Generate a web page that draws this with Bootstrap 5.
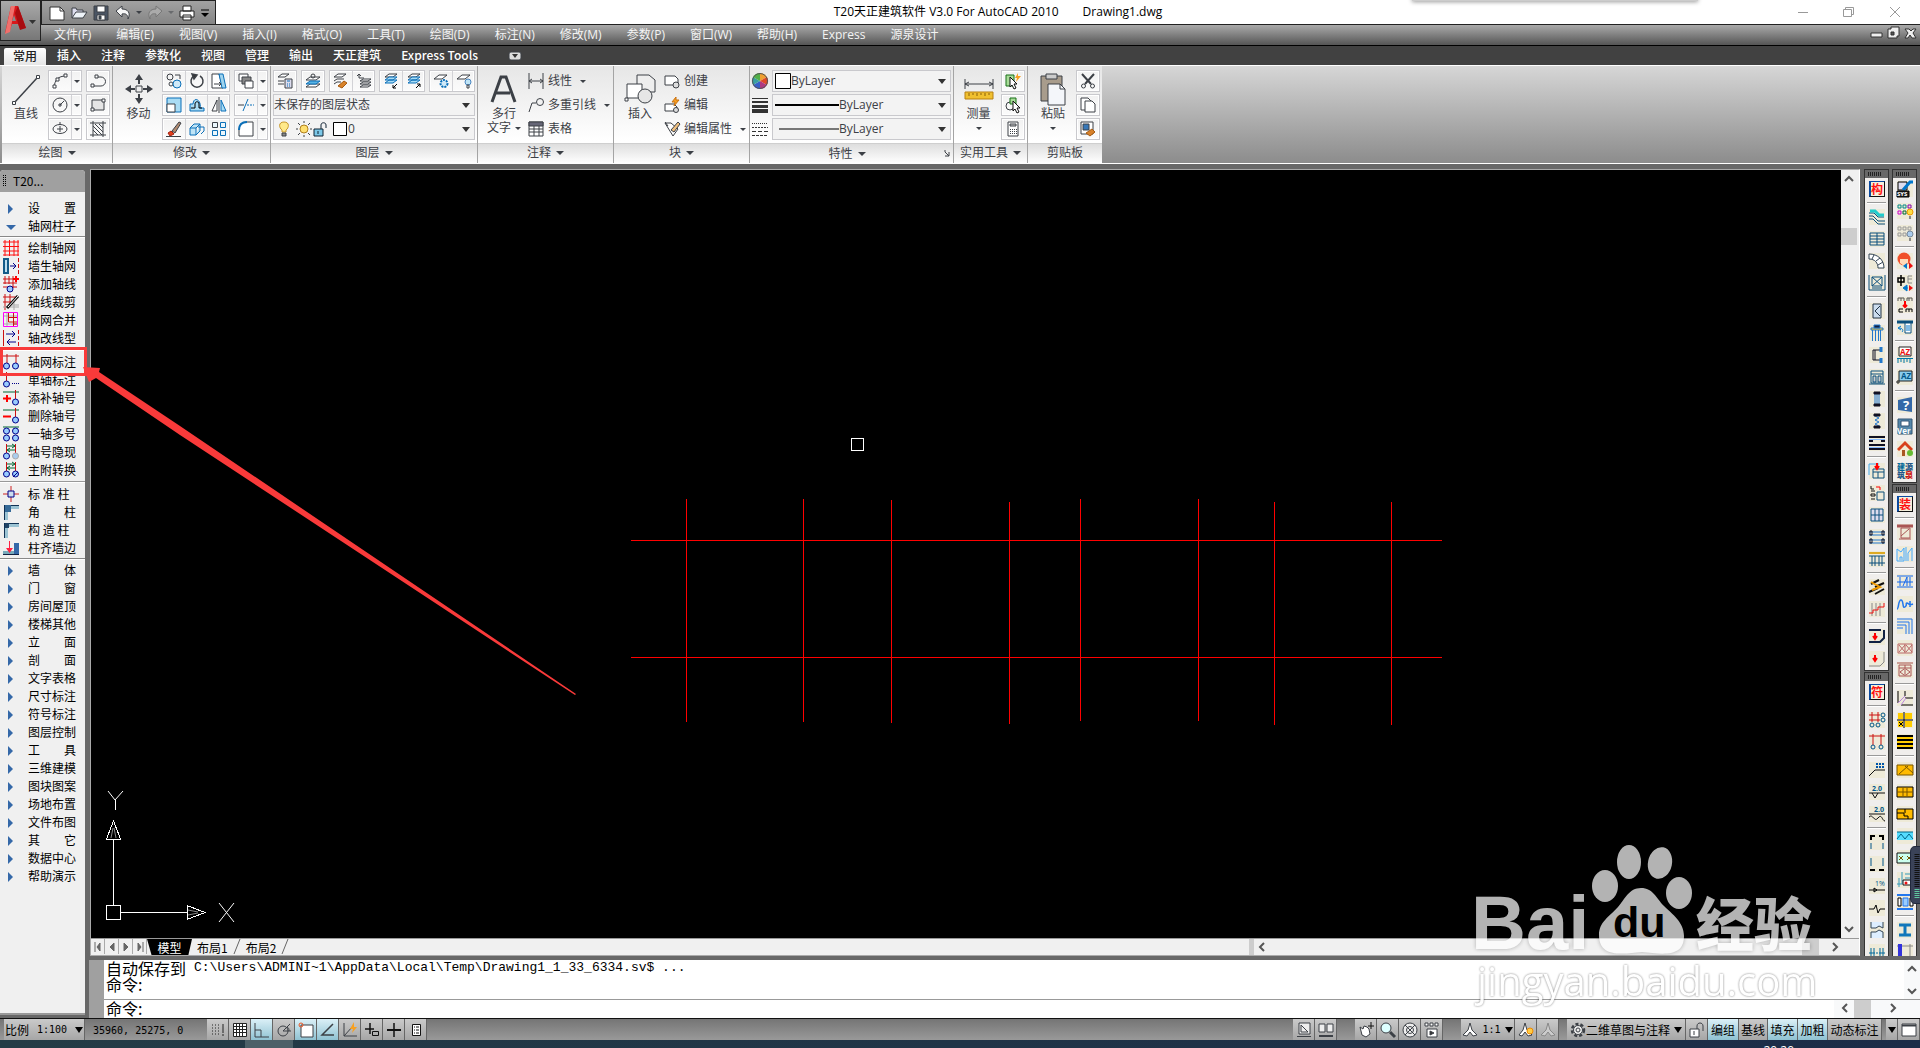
<!DOCTYPE html>
<html lang="zh-CN">
<head>
<meta charset="utf-8">
<meta name="viewport" content="width=device-width, initial-scale=1">
<title>T20天正建筑软件 V3.0 For AutoCAD 2010</title>
<link href="https://cdn.jsdelivr.net/npm/bootstrap@5.3.0/dist/css/bootstrap.min.css" rel="stylesheet">
<style>
:root{--ink:#3c4046;--frame:#686868}
body{font-family:"Open Sans","Noto Sans CJK SC",sans-serif;font-size:12px;line-height:16px;background:var(--frame);color:#000;overflow:hidden;fill:none;stroke:var(--ink)}
button,select,input{font:inherit;color:inherit;border:0;padding:0;background:none;border-radius:0}
svg{display:block;flex:none;overflow:visible}
.i16{width:16px;height:16px}
.i30{width:30px;height:34px}
.cjk{font-family:"Noto Sans CJK SC",sans-serif}
/* title and menus */
.titlebar{height:24px;background:#fff}
.quick{width:175px;margin-left:41px;background:linear-gradient(#a2a2a2,#858585);border:1px solid #222;border-bottom:0;padding-left:7px;gap:6px}
.quick .tri.sm{margin:0 -1px}
.appbtn{left:0;top:0;width:41px;height:41px;background:linear-gradient(#aaa,#777);border:1px solid #222;z-index:5}
.winctl{padding-right:2px}
.winctl button{width:46px;height:24px}
.floatedge{left:1412px;top:-4px;width:286px;height:5px;background:#ccc;box-shadow:0 1px 4px #999}
.menubar{height:22px;background:linear-gradient(#aaa,#555);border-top:1px solid #222;border-bottom:1px solid #000;padding-left:42px;color:#fff}
.menubar a{color:#f4f4f4;text-decoration:none;padding:2px 13px 2px 12px}
.tabbar{height:19px;background:#414141;padding-left:4px}
.tabbar a{color:#fff;text-decoration:none;padding:1px 10px;font-weight:500;font-family:"Noto Sans CJK SC",sans-serif}
.tabbar a.on{background:linear-gradient(#fff,#e6e6e6);color:#222;padding:1px 9px;border-radius:2px 2px 0 0;margin:2px 1px 0 0;line-height:14px}
/* ribbon */
.ribbon{height:99px;background:linear-gradient(#d6d6d6,#8c8c8c);border:solid #fff;border-width:1px 0;padding-left:2px;color:var(--ink)}
.panel{border-right:1px solid #a4a4a4;background:linear-gradient(#e6e6e6,#fff 75px)}
.pbody{height:77px;padding:4px 2px 0}
.pfoot{height:20px;border-top:1px solid #cfcfcf;background:linear-gradient(#dedede,#fff);line-height:18px;text-align:center;width:100%}
.tri{display:inline-block;border:solid transparent;border-width:4px 4px 0;border-top-color:var(--ink);vertical-align:2px;margin-left:5px}
.tri.sm{border-width:3px 3px 0;margin-left:6px}
.big{width:48px;line-height:14px;text-align:center}
.big svg{margin:3px auto 0}
.cell{height:22px;border:1px solid #c9c9cd;background:linear-gradient(#f2f2f2,#fbfbfb);box-shadow:inset 0 0 0 1px #fff}
.cell button{width:22px;display:flex;justify-content:center;align-items:center}
.cell button+button{border-left:1px solid #d2d2d6}
.cell button.dd{width:10px}
.cell .tri{margin:0;border-width:3px 3px 0}
.stack{display:flex;flex-direction:column;gap:2px}
.combo{height:22px;border:1px solid #c9c9cd;background:#f3f3f3;position:relative;padding-left:2px}
.combo::after{content:"";position:absolute;right:4px;top:8px;border:solid transparent;border-width:5px 4px 0;border-top-color:#333;pointer-events:none}
.combo select{appearance:none;flex:1;height:20px;outline:0}
.lrow{height:22px;display:flex;align-items:center;gap:4px;white-space:nowrap}
.lrow .tri{margin-left:4px}
/* side panel */
main{padding-top:5px}
.side{width:85px;background:#f0f0f0;border-radius:4px 4px 0 0;margin:1px 4px 3px 0;border-bottom:2px solid #999}
.sidecap{height:22px;background:#a0a0a0;border-radius:4px 4px 0 0;padding:0 0 0 3px;gap:6px;margin-bottom:7px}
.side button{display:flex;align-items:center;height:18px;width:85px;padding-left:3px;gap:9px;line-height:16px;white-space:nowrap}
.side hr{margin:0;height:4px;opacity:1;border:0;background:linear-gradient(#0000 1px,#888 1px 2px,#fff 2px 3px,#0000 3px)}
.side hr.wide{height:6px;background:linear-gradient(#0000 2px,#999 2px 3px,#fff 3px 4px,#0000 4px)}
/* drawing window */
.canvaswin{border:1px solid #aaa;border-right-color:#fff;margin:0 4px 0 1px;background:#f0f0f0}
.draw{background:#000}
.vbar{width:18px;padding-right:2px}
.thumb{background:#cdcdcd}
.vthumb{height:17px;margin-top:41px}
.sheets{height:17px;border-top:1px solid #999}
.sheets .nav1{width:14px;height:15px;border-right:1px solid #aaa;display:flex;align-items:center;justify-content:center}
.sheets .sheet{padding:0 5px;line-height:15px}
.sheet.on{background:#000;color:#fff;clip-path:polygon(0 0,100% 0,92% 100%,10% 100%);width:45px}
/* docked toolbars */
.dock{width:25px;margin-right:3px;overflow:hidden}
.tb{background:#f0eeec;border:1px solid #333;margin-bottom:1px;stroke:#0b4f7d}
.grip{height:8px;background:repeating-linear-gradient(90deg,#222 0 1px,#0000 1px 2px) 3px 2px/14px 4px no-repeat #686868}
.tb button{display:flex;width:23px;height:22px;align-items:center;justify-content:center}
.tb hr{margin:0 2px;height:6px;border:0;opacity:1;background:linear-gradient(#0000 2px,#999 2px 3px,#fff 3px 4px,#0000 4px)}
.tb svg{background:#eeead8;width:16px;height:16px}
.seal{width:16px;height:16px;border:solid #111;border-width:1px 1px 1px 2px;border-color:#0a4aa0 #111 #111 #0a4aa0;color:#f11;background:#f4f0dc;line-height:13px;font-weight:700}
/* command window */
.cmd{height:58px;background:#fff;border-left:15px solid #a0a0a0;margin-top:4px;font:13px/16px "Liberation Mono","Noto Sans CJK SC",monospace}
.cmd .zh{font:16px/16px "Noto Sans CJK SC",sans-serif;white-space:pre}
.cmd .say{height:16px;display:flex;align-items:center;padding-left:2px}
.cmd input{outline:0;flex:1}
.cmdin{border-top:1px solid #999;height:19px}
/* status bar */
.status{height:22px;background:linear-gradient(#757575,#999);border-top:1px solid #111}
.status button{height:21px;min-width:22px;border-right:1px solid #666;background:linear-gradient(#cacaca,#a6a6a6);display:flex;align-items:center;justify-content:center;white-space:nowrap}
.status button.on{background:linear-gradient(#dbf0f7,#8fc2d2)}
.status .gapr{margin-right:18px}
.mono{font-family:"DejaVu Sans Mono","Noto Sans CJK SC",monospace;font-size:10px}
.status .mono{line-height:24px}
.tri.dk{border-width:6px 4px 0;border-top-color:#000;margin-left:4px}
.taskbar{height:8px;background:linear-gradient(90deg,#243c46,#1c2c48)}
.clock{padding:3px 126px 0 0}
.over{position:absolute;pointer-events:none}
</style>
</head>
<body class="vh-100 d-flex flex-column position-relative">

<header>
<button class="appbtn position-absolute" aria-label="应用程序菜单"><svg width="39" height="38" stroke="none"><path d="M10 4h7l8 22-6 1-2-5h-6l-2 6-5 3z" fill="#d8181c"/><path d="M10 4h4l-5 26-5 2z" fill="#f0706c"/><path d="M17 4l8 22-6 2-5-17z" fill="#a80c10"/><path d="M13 13l2 6h-4z" fill="#8a8a8a"/><path d="M28 18h7l-3.500 4z" fill="#333"/></svg></button>
<div class="titlebar d-flex">
 <div class="quick d-flex align-items-center">
  <button aria-label="新建"><svg class="i16" stroke="#333"><path d="M1 2h10l4 4v9H1z" fill="#fff"/><path d="M11 2v4h4"/></svg></button>
  <button aria-label="打开"><svg class="i16"><path d="M1 13V3h4l1 2h6v2" fill="#dde"/><path d="M1 13L5 7h11l-4 6z" fill="#eef3f8"/></svg></button>
  <button aria-label="保存"><svg class="i16"><path d="M1 1h14v14H1z" fill="#4a5564"/><path d="M4 1h8v6H4zM4 10h8v5H4z" fill="#fff"/><path d="M6 11h2v3H6z" fill="#345"/></svg></button>
  <button aria-label="放弃"><svg class="i16"><path d="M1 6l6-5v3c6 0 9 4 6 10 0-4-2-6-6-5v3z" fill="#f6f6f6"/></svg></button>
  <i class="tri sm"></i>
  <button aria-label="重做"><svg class="i16" stroke="#777"><path d="M15 6L9 1v3C3 4 0 8 3 14c0-4 2-6 6-5v3z" fill="#aaa"/></svg></button>
  <i class="tri sm opacity-50"></i>
  <button aria-label="打印"><svg class="i16" stroke="#222"><path d="M4 1h8v5H4zM1 6h14v6H1zM4 10h8v5H4z" fill="#fff"/></svg></button>
  <svg width="8" height="8" stroke="#000"><path d="M0 1h8"/><path d="M0 4h8l-4 4z" fill="#000" stroke="none"/></svg>
 </div>
 <div class="flex-fill text-center pt-1"><span class="me-4">T20天正建筑软件 V3.0 For AutoCAD 2010</span><span>Drawing1.dwg</span></div>
 <div class="winctl d-flex">
  <button aria-label="最小化"><svg width="46" height="22" stroke="#999"><path d="M18 11.500h10"/></svg></button>
  <button aria-label="还原"><svg width="46" height="22" stroke="#999"><path d="M17.500 8.500h8v7h-8zM19.500 8.500v-2h8v7h-2"/></svg></button>
  <button aria-label="关闭"><svg width="46" height="22" stroke="#999"><path d="M18 6l10 10M28 6L18 16"/></svg></button>
 </div>
</div>
<nav class="menubar d-flex">
 <a href="#">文件(F)</a><a href="#">编辑(E)</a><a href="#">视图(V)</a><a href="#">插入(I)</a><a href="#">格式(O)</a><a href="#">工具(T)</a><a href="#">绘图(D)</a><a href="#">标注(N)</a><a href="#">修改(M)</a><a href="#">参数(P)</a><a href="#">窗口(W)</a><a href="#">帮助(H)</a><a href="#">Express</a><a href="#">源泉设计</a>
 <svg class="ms-auto me-1" width="46" height="18" stroke="#333"><path d="M1 8h11v4H1zM21 2h8v9h-2v2h-9V4h3zM35 4h4l2 2 2-2h3l-3 4 3 5h-4l-2-3-2 3h-3l3-5z" fill="#eee"/><path d="M21 7h3v3h-3z" fill="#555"/></svg>
</nav>
<nav class="tabbar d-flex">
 <a class="on" href="#">常用</a><a href="#">插入</a><a href="#">注释</a><a href="#">参数化</a><a href="#">视图</a><a href="#">管理</a><a href="#">输出</a><a href="#">天正建筑</a><a href="#">Express Tools</a>
 <button class="ms-3 ps-1" aria-label="最小化功能区"><svg width="14" height="9"><rect x="1" y="1" width="12" height="8" rx="2" fill="#ddd"/><path d="M4 3h6l-3 4z" fill="#333" stroke="none"/></svg></button>
</nav>
</header>

<section class="ribbon d-flex">
 <div class="panel" style="width:111px"><div class="pbody d-flex justify-content-between">
  <button class="big d-flex flex-column"><svg class="i30"><path d="M4 29L26 5" stroke-width="1.500"/><path d="M1.500 28.500h3v3h-3zM25.500 2.500h3v3h-3z" fill="#fff"/></svg><span class="w-100">直线</span></button>
  <div class="d-flex gap-1"><div class="stack">
   <div class="cell d-flex"><button aria-label="圆弧"><svg class="i16"><path d="M2 14C3 7 6 3 14 3"/><path d="M1 12h3v3H1zM4 5h3v3H4zM12 1h3v3h-3z" fill="#fff"/></svg></button><button class="dd"><i class="tri"></i></button></div>
   <div class="cell d-flex"><button aria-label="圆"><svg class="i16"><circle cx="8" cy="8" r="7"/><path d="M8 8l4-4"/><path d="M7 7h2v2H7z"/></svg></button><button class="dd"><i class="tri"></i></button></div>
   <div class="cell d-flex"><button aria-label="椭圆"><svg class="i16"><ellipse cx="8" cy="8" rx="7" ry="4.500"/><path d="M8 5v6M5 8h6M8 1v3"/></svg></button><button class="dd"><i class="tri"></i></button></div>
  </div><div class="stack">
   <div class="cell"><button class="h-100" aria-label="多段线"><svg class="i16"><path d="M7 4h4a4 4 0 010 9H3"/><path d="M5 2h3v3H5zM1 11h3v3H1z" fill="#fff"/></svg></button></div>
   <div class="cell"><button class="h-100" aria-label="矩形"><svg class="i16"><path d="M2 3h12v10H2z" fill="#e5e5e5"/><path d="M12 2h3v3h-3zM1 11h3v3H1z" fill="#fff"/></svg></button></div>
   <div class="cell"><button class="h-100" aria-label="图案填充"><svg class="i16"><path d="M3 0v16M13 0v16M0 2h16M0 14h16M3 5l9 9M5 3l8 8M3 9l5 5M9 3l4 4"/></svg></button></div>
  </div></div></div><div class="pfoot">绘图<i class="tri"></i></div></div>

 <div class="panel" style="width:158px"><div class="pbody d-flex justify-content-between">
  <button class="big d-flex flex-column"><svg class="i30" stroke-width="2"><path d="M15 3v8M15 21v8M3 16h8M19 16h8"/><path d="M15 1l4 6h-8zM15 31l4-6h-8zM1 16l6-4v8zM29 16l-6-4v8z" fill="#3c4046" stroke="none"/><path d="M12 13h6v6h-6z" stroke-width="1"/></svg><span class="w-100">移动</span></button>
  <div class="d-flex gap-1"><div class="stack">
   <div class="cell d-flex"><button aria-label="复制"><svg class="i16"><circle cx="4" cy="4" r="3"/><circle cx="5" cy="11" r="2"/><circle cx="11" cy="11" r="4" stroke="#0a6fb8" fill="#cfe9f8"/><path d="M9 2h5v4"/></svg></button><button aria-label="旋转"><svg class="i16" stroke-width="1.500"><path d="M5 3a6 6 0 106 0"/><path d="M3 1l5 1-3 4z" fill="#333"/></svg></button><button aria-label="拉伸"><svg class="i16"><path d="M1 1h7l4 14H1z" fill="#fff"/><path d="M8 1h4l3 14h-4z" fill="#9fd4ee" stroke="#0a6fb8"/><path d="M3 11h7M8 9l2 2-2 2"/></svg></button></div>
   <div class="cell d-flex"><button aria-label="缩放"><svg class="i16"><path d="M1 1h14v14H1z" fill="#a9dcf4" stroke="#0a6fb8"/><path d="M1 7h8v8H1z" fill="#fff"/></svg></button><button aria-label="偏移"><svg class="i16"><path d="M1 14h14v-3h-4c2-7-6-13-7-4H1z" fill="#a9dcf4" stroke="#0a6fb8"/><path d="M2 11h4V7c0-3 4-3 4 0v4h3" stroke="#000"/></svg></button><button aria-label="镜像"><svg class="i16"><path d="M6 3v11H1z" fill="#fff"/><path d="M8 0v16"/><path d="M10 3v11h5z" fill="#a9dcf4" stroke="#0a6fb8"/></svg></button></div>
   <div class="cell d-flex"><button aria-label="删除"><svg class="i16"><path d="M6 10l7-9 2 1-6 10z" fill="#b08a70"/><path d="M2 12l3-2 3 3-4 2z" fill="#e2401c" stroke="#a02010"/><path d="M0 15.500h15"/></svg></button><button aria-label="分解"><svg class="i16" stroke="#0a6fb8"><path d="M1 7h6v7H1zM1 7l4-4h6L7 7M7 14l4-4V3" fill="#bfe4f6"/><path d="M9 6h6v4l-3 3"/></svg></button><button aria-label="阵列"><svg class="i16" fill="#eaf6fc"><path d="M1.500 1.500h5v5h-5z"/><path d="M9.500 1.500h5v5h-5zM1.500 9.500h5v5h-5zM9.500 9.500h5v5h-5z" stroke="#0a6fb8"/></svg></button></div>
  </div><div class="stack">
   <div class="cell d-flex"><button aria-label="前置"><svg class="i16"><path d="M1 1h9v7H1z" fill="#fff"/><path d="M4 4h9v7H4z" fill="#888"/><path d="M7 8h8v7H7z" fill="#fff"/></svg></button><button class="dd"><i class="tri"></i></button></div>
   <div class="cell d-flex"><button aria-label="修剪"><svg class="i16"><path d="M0 8h6"/><path d="M5 14L10 2M9 8h2M12 8h2M15 8h1" stroke="#0a6fb8"/></svg></button><button class="dd"><i class="tri"></i></button></div>
   <div class="cell d-flex"><button aria-label="圆角"><svg class="i16"><path d="M1 15V9c0-5 3-8 8-8h6v14z" fill="#fff"/><path d="M1 9c0-5 3-8 8-8" stroke="#0a6fb8" stroke-width="2"/></svg></button><button class="dd"><i class="tri"></i></button></div>
  </div></div></div><div class="pfoot">修改<i class="tri"></i></div></div>

 <div class="panel" style="width:207px"><div class="pbody stack">
  <div class="d-flex justify-content-between">
   <div class="cell d-flex"><button aria-label="图层特性"><svg class="i16"><path d="M1 4l4-3h7l-4 3zM1 8h6M1 11h6" fill="#fff"/><path d="M8 6h7v9H8z" fill="#dde"/><path d="M10 8h3M10 11h1M12 11h1M10 13h1M12 13h1" stroke="#0a6fb8"/></svg></button></div>
   <div class="cell d-flex"><button aria-label="置为当前"><svg class="i16"><path d="M1 7l4-3h10l-4 3zM1 14l4-3h10l-4 3z" fill="#fff"/><path d="M1 11l4-3h10l-4 3z" fill="#58b4e4" stroke="#0a6fb8"/><circle cx="8" cy="3" r="2"/></svg></button></div>
   <div class="cell d-flex"><button aria-label="匹配"><svg class="i16"><path d="M1 4l4-3h8l-4 3zM1 8l3-2h7M1 11l3-2h4" fill="#fff"/><path d="M5 13l6-5 3 2-5 5z" fill="#d8822a" stroke="#a65a10"/></svg></button><button aria-label="上一个图层"><svg class="i16"><path d="M4 8l3-2h8l-3 2zM4 11l3-2h8l-3 2zM4 14l3-2h8l-3 2z" fill="#fff"/><path d="M8 5H3V1M1 3l2-2 2 2"/></svg></button></div>
   <div class="cell d-flex"><button aria-label="隔离"><svg class="i16"><path d="M2 4l4-3h8l-4 3z" fill="#fff"/><path d="M2 7l4-3h8l-4 3zM2 10l4-3h8l-4 3z" fill="#a9dcf4" stroke="#0a6fb8"/><path d="M14 11l-4 4h3M10 15v-3" stroke="#000"/></svg></button><button aria-label="取消隔离"><svg class="i16"><path d="M2 4l4-3h8l-4 3z" fill="#fff"/><path d="M2 7l4-3h8l-4 3zM2 10l4-3h8l-4 3z" fill="#a9dcf4" stroke="#0a6fb8"/><path d="M10 15l4-4h-3M14 11v3" stroke="#000"/></svg></button></div>
   <div class="cell d-flex"><button aria-label="冻结"><svg class="i16"><path d="M1 6l5-4h8l-5 4z" fill="#fff"/><circle cx="11" cy="10.500" r="3.500" fill="#cfe9f8" stroke="#0a6fb8" stroke-dasharray="2 1" stroke-width="2"/></svg></button><button aria-label="关闭图层"><svg class="i16"><path d="M1 6l5-4h8l-5 4z" fill="#fff"/><circle cx="12" cy="9" r="3" fill="#bfe4f6" stroke="#4a86c0"/><path d="M11 12h2v3h-2z"/></svg></button></div>
  </div>
  <div class="combo d-flex ps-0"><select aria-label="图层状态"><option>未保存的图层状态</option></select></div>
  <div class="combo d-flex align-items-center"><svg class="i16"><path d="M8 1c-6 0-5 6-2 8v2h4V9c3-2 4-8-2-8z" fill="#ffe98a" stroke="#c8982c"/><path d="M6 12h4v3H6z" fill="#888"/></svg><svg class="i16 ms-1"><circle cx="8" cy="8" r="4" fill="#ffe070" stroke="#b08020"/><path d="M8 0v2M8 14v2M0 8h2M14 8h2M2 2l2 2M12 12l2 2M14 2l-2 2M4 12l-2 2"/></svg><svg class="i16"><path d="M2 8h9v7H2z" fill="#7cc8e8" stroke="#123"/><path d="M9 8V4c0-3 5-3 5 0v3M6 10v3" stroke="#123"/></svg><svg class="ms-1" width="16" height="16"><path d="M1.500 1.500h13v13h-13z" fill="#fff" stroke="#000"/></svg><select aria-label="图层"><option>0</option></select></div>
 </div><div class="pfoot">图层<i class="tri"></i></div></div>

 <div class="panel" style="width:136px"><div class="pbody d-flex">
  <button class="big d-flex flex-column"><svg class="i30"><path d="M3 29L12 4h5l9 25M7 20h14" stroke-width="3"/></svg><span class="w-100">多行</span><span class="w-100">文字<i class="tri sm ms-1"></i></span></button>
  <div class="stack">
   <button class="lrow"><svg class="i16"><path d="M1 0v16M15 0v16M1 8h14M4 6L1 8l3 2M12 6l3 2-3 2"/></svg>线性<i class="tri sm"></i></button>
   <button class="lrow"><svg class="i16"><path d="M1 15l3-9h4"/><circle cx="12" cy="5" r="3.500"/></svg>多重引线<i class="tri sm"></i></button>
   <button class="lrow"><svg class="i16"><path d="M1 1h14v14H1zM1 8h14M1 11h14M6 5v10M11 5v10" fill="#fff"/><path d="M1 1h14v4H1z" fill="#667"/></svg>表格</button>
  </div></div><div class="pfoot">注释<i class="tri"></i></div></div>

 <div class="panel" style="width:136px"><div class="pbody d-flex">
  <button class="big d-flex flex-column"><svg class="i30"><path d="M12 2h12l6 5v12H12z" fill="#eee"/><path d="M2 11h15v14H2z" fill="#fff"/><path d="M0 25h3v3H0z" fill="#fff"/><circle cx="20" cy="23" r="7" fill="#e6e6e6"/></svg><span class="w-100">插入</span></button>
  <div class="stack">
   <button class="lrow"><svg class="i16"><path d="M1 3h10l3 3v6H1z" fill="#fff"/><circle cx="12" cy="12" r="3" fill="#ddd"/></svg>创建</button>
   <button class="lrow"><svg class="i16"><path d="M1 7h9l3 3v4H1z" fill="#fff"/><circle cx="12" cy="13" r="2.500" fill="#ddd"/><path d="M12 0L8 5h3l-1 4 5-6h-3z" fill="#f8a020" stroke="#c87010"/></svg>编辑</button>
   <button class="lrow"><svg class="i16"><path d="M1 2h6l7 6-5 7z" fill="#fff"/><path d="M1 1l3 4M7 9l7-8 2 2-6 8z" fill="#f0c080"/></svg>编辑属性<i class="tri sm"></i></button>
  </div></div><div class="pfoot">块<i class="tri"></i></div></div>

 <div class="panel" style="width:204px"><div class="pbody stack">
  <div class="d-flex align-items-center gap-1"><svg class="i16" stroke="none"><path d="M8 8V0a8 8 0 017 4z" fill="#f0a030"/><path d="M8 8l7-4a8 8 0 010 8z" fill="#e04828"/><path d="M8 8l7 4a8 8 0 01-7 4z" fill="#b03880"/><path d="M8 8v8a8 8 0 01-7-4z" fill="#3860c8"/><path d="M8 8l-7 4a8 8 0 010-8z" fill="#38a0a0"/><path d="M8 8L1 4a8 8 0 017-4z" fill="#50b048"/><circle cx="8" cy="8" r="7.500" stroke="#555"/></svg><div class="combo d-flex align-items-center flex-fill"><svg width="16" height="16"><path d="M.500 .500h15v15H.500z" fill="#fff" stroke="#000"/></svg><select aria-label="颜色"><option>ByLayer</option></select></div></div>
  <div class="d-flex align-items-center gap-1"><svg class="i16" stroke="#333"><path d="M0 1.500h16"/><path d="M0 5h16" stroke-width="2"/><path d="M0 9.500h16" stroke-width="3"/><path d="M0 14h16" stroke-width="4"/></svg><div class="combo d-flex align-items-center flex-fill"><svg width="64" height="4"><path d="M0 2h64" stroke="#000" stroke-width="2"/></svg><select aria-label="线宽"><option>ByLayer</option></select></div></div>
  <div class="d-flex align-items-center gap-1"><svg class="i16" stroke="#333"><path d="M0 2.500h16" stroke-dasharray="1 1"/><path d="M0 6.500h16" stroke-dasharray="2 1"/><path d="M0 10.500h16" stroke-dasharray="4 2"/><path d="M0 14.500h16" stroke-dasharray="3 1"/></svg><div class="combo d-flex align-items-center flex-fill"><svg width="64" height="4"><path d="M4 2h60" stroke="#777" stroke-width="2"/></svg><select aria-label="线型"><option>ByLayer</option></select></div></div>
 </div><div class="pfoot d-flex align-items-center"><span class="flex-fill">特性<i class="tri"></i></span><svg width="9" height="8"><path d="M1 2l4 4M5 2v4H1M0 1h2"/></svg></div></div>

 <div class="panel" style="width:74px"><div class="pbody d-flex justify-content-between">
  <button class="big d-flex flex-column"><svg class="i30"><path d="M1 6v10M29 6v10M1 11h28M5 9l-4 2 4 2M25 9l4 2-4 2"/><path d="M1 19h28v7H1z" fill="#f0c030" stroke="#b88010"/><path d="M5 20v3M9 20v2M13 20v3M17 20v2M21 20v3M25 20v2" stroke="#8a6008"/></svg><span class="w-100">测量</span><span class="w-100"><i class="tri sm m-0"></i></span></button>
  <div class="stack">
   <div class="cell"><button class="h-100" aria-label="快速选择"><svg class="i16"><path d="M1 2h8v11H1z" fill="#a8dc98" stroke="#187018"/><path d="M5 4v10l2-2 2 4 2-1-2-4h3z" fill="#fff" stroke="#111"/><path d="M13 0l-3 5h2l-1 4 5-6h-3z" fill="#f8a020" stroke="none"/></svg></button></div>
   <div class="cell"><button class="h-100" aria-label="选择"><svg class="i16"><circle cx="5" cy="9" r="4"/><path d="M5 1h6v6H5z" fill="#a8dc98" stroke="#187018"/><path d="M8 4v10l2-2 2 4 2-1-2-4h3z" fill="#fff" stroke="#111"/></svg></button></div>
   <div class="cell"><button class="h-100" aria-label="计算器"><svg class="i16"><path d="M3 1h10v14H3z" fill="#fff"/><path d="M5 3h6v2H5z" fill="#ccc"/><path d="M5 8.500h7M5 10.500h7M5 12.500h7" stroke-dasharray="1 1"/></svg></button></div>
  </div></div><div class="pfoot">实用工具<i class="tri"></i></div></div>

 <div class="panel border-0" style="width:74px"><div class="pbody d-flex justify-content-between">
  <button class="big d-flex flex-column"><svg class="i30"><path d="M3 3h21v25H3z" fill="#a89c8c"/><path d="M8 1h11v5H8z" fill="#ccc"/><path d="M10 11h12l5 5v16H10z" fill="#f4f6fa"/><path d="M22 11v5h5"/></svg><span class="w-100">粘贴</span><span class="w-100"><i class="tri sm m-0"></i></span></button>
  <div class="stack">
   <div class="cell"><button class="h-100" aria-label="剪切"><svg class="i16"><path d="M2 1l9 10M14 1L5 11" stroke-width="2"/><circle cx="3.500" cy="13" r="2"/><circle cx="12.500" cy="13" r="2"/></svg></button></div>
   <div class="cell"><button class="h-100" aria-label="复制剪裁"><svg class="i16"><path d="M1 1h7l3 3v9H1z" fill="#fff"/><path d="M5 4h7l3 3v8H5z" fill="#fff"/></svg></button></div>
   <div class="cell"><button class="h-100" aria-label="特性匹配"><svg class="i16"><path d="M1 1h12v12H1z" fill="#fff"/><path d="M3 3h6v6H3z" fill="#3878b8"/><path d="M6 12l6-4 3 3-5 4z" fill="#d8822a" stroke="#a65a10"/></svg></button></div>
  </div></div><div class="pfoot">剪贴板</div></div>
</section>

<main class="d-flex flex-fill overflow-hidden">
 <aside class="d-flex flex-column"><div class="side flex-fill cjk">
  <div class="sidecap d-flex align-items-center"><svg width="4" height="12" stroke="#000" stroke-dasharray="1 1"><path d="M.500 0v12M2.500 0v12"/></svg>T20...</div>
  <button><svg class="i16" fill="#3468a8" stroke="none"><path d="M5 4l5 5-5 5z"/></svg>设　　置</button>
  <button><svg class="i16" fill="#3468a8" stroke="none"><path d="M3 7h10l-5 5z"/></svg>轴网柱子</button><hr>
  <button><svg class="i16" stroke="#f11"><path d="M2 0v16M6.500 0v16M11 0v16M15 0v16M0 2h16M0 6.500h16M0 11h16M0 15h16"/></svg>绘制轴网</button>
  <button><svg class="i16"><path d="M1 1h4v14H1z" fill="#bde" stroke="#135a88" stroke-width="2"/><path d="M7 8h6M10 5l3 3-3 3" stroke="#008"/><path d="M15.500 0v16" stroke="#c11" stroke-dasharray="4 2"/></svg>墙生轴网</button>
  <button><svg class="i16" stroke="#c11"><path d="M2 0v8M6 0v8M10 0v12M0 3h11M0 7h14M0 11h14"/><path d="M13 0v6M10 3h6" stroke="#f00" stroke-width="2"/><circle cx="7" cy="13" r="3" fill="#9cf" stroke="#008"/></svg>添加轴线</button>
  <button><svg class="i16" stroke="#c11"><path d="M2 0v16M7 0v10M0 3h14M0 8h8"/><path d="M8 11h8M11 8v8M0 13h16" stroke="#aaa"/><path d="M4 14L15 2" stroke="#111" stroke-width="3"/><path d="M5 13L15 2" stroke="#fff"/></svg>轴线裁剪</button>
  <button><svg class="i16"><path d="M1 4h13M1 12h13M4 1v13" stroke="#aaa"/><path d="M5.500 1v9h9M10.500 1v14M5 5.500h10M10 12h5" stroke="#c11"/><path d="M.500 .500h14v14H.500z" stroke="#f0f"/></svg>轴网合并</button>
  <button><svg class="i16"><path d="M.500 0v16" stroke="#c11"/><path d="M15.500 0v16" stroke="#c11" stroke-dasharray="4 2"/><path d="M3 4h9M9 1l3 3-3 3M13 12H4M7 9l-3 3 3 3" stroke="#008"/></svg>轴改线型</button><hr class="wide">
  <button><svg class="i16"><path d="M0 2h16M4 0v9M13 0v9" stroke="#c11"/><g fill="#9cf" stroke="#008"><circle cx="3.500" cy="12" r="3"/><circle cx="12.500" cy="12" r="3"/></g></svg>轴网标注</button>
  <button><svg class="i16"><path d="M3.500 0v9" stroke="#c11"/><circle cx="3.500" cy="12" r="3" fill="#9cf" stroke="#008"/><path d="M9 11.500h7" stroke="#008" stroke-dasharray="1 1"/></svg>单轴标注</button>
  <button><svg class="i16"><path d="M0 2h16" stroke="#063"/><path d="M12.500 0v9" stroke="#c11"/><path d="M4 5v7M0 8.500h8" stroke="#f00" stroke-width="2"/><circle cx="12.500" cy="12" r="3" fill="#9cf" stroke="#008"/></svg>添补轴号</button>
  <button><svg class="i16"><path d="M0 2h16" stroke="#063"/><path d="M12.500 0v9" stroke="#c11"/><path d="M0 8.500h8" stroke="#f00" stroke-width="2"/><circle cx="12.500" cy="12" r="3" fill="#9cf" stroke="#008"/></svg>删除轴号</button>
  <button><svg class="i16"><path d="M0 1h16" stroke="#063"/><g fill="#9cf" stroke="#008"><circle cx="3.500" cy="5" r="3"/><circle cx="12.500" cy="5" r="3"/><circle cx="3.500" cy="12" r="3"/><circle cx="12.500" cy="12" r="3"/></g></svg>一轴多号</button>
  <button><svg class="i16"><path d="M3.500 0v9M12.500 0v9" stroke="#c11"/><path d="M4 2h8M9 0l3 2-3 2M12 6H4M7 4L4 6l3 2" stroke="#063"/><circle cx="3.500" cy="12" r="3" fill="#9cf" stroke="#008"/><circle cx="12.500" cy="12" r="3" fill="#ace" stroke="#aaa"/></svg>轴号隐现</button>
  <button><svg class="i16"><path d="M3.500 0v9M12.500 0v9" stroke="#c11"/><path d="M4 2h8M9 0l3 2-3 2M12 6H4M7 4L4 6l3 2" stroke="#063"/><g fill="#9cf" stroke="#008"><circle cx="3.500" cy="12" r="3"/><circle cx="12.500" cy="12" r="3"/><path d="M10 15l5-5"/></g></svg>主附转换</button><hr class="wide">
  <button><svg class="i16"><path d="M0 8h16M8 0v16" stroke="#c22"/><path d="M5 5h6v6H5z" fill="#cde" stroke="#008"/></svg>标 准 柱</button>
  <button><svg class="i16" stroke="none"><path d="M1 1h7v7H1z" fill="#356a98"/><path d="M8 1h8v4H8zM1 8h4v8H1z" fill="#9cc4d4"/><path d="M8 1h8v1H8zM1 1h1v15H1z" fill="#135"/></svg>角　　柱</button>
  <button><svg class="i16" stroke="none"><path d="M1 1h5v5H1z" fill="#246"/><path d="M6 1h10v4H6zM1 6h4v10H1z" fill="#9cc4d4"/><path d="M6 1h10v1H6zM1 1h1v15H1z" fill="#135"/></svg>构 造 柱</button>
  <button><svg class="i16" stroke="none"><path d="M0 11h16v4H0z" fill="#7ab"/><path d="M11 3h5v12h-5z" fill="#3468a8"/><path d="M0 14h16v1H0z" fill="#124"/><path d="M6 1h1v7h3l-3.500 5L3 8h3z" fill="#f24"/></svg>柱齐墙边</button><hr>
  <button><svg class="i16" fill="#3468a8" stroke="none"><path d="M5 4l5 5-5 5z"/></svg>墙　　体</button>
  <button><svg class="i16" fill="#3468a8" stroke="none"><path d="M5 4l5 5-5 5z"/></svg>门　　窗</button>
  <button><svg class="i16" fill="#3468a8" stroke="none"><path d="M5 4l5 5-5 5z"/></svg>房间屋顶</button>
  <button><svg class="i16" fill="#3468a8" stroke="none"><path d="M5 4l5 5-5 5z"/></svg>楼梯其他</button>
  <button><svg class="i16" fill="#3468a8" stroke="none"><path d="M5 4l5 5-5 5z"/></svg>立　　面</button>
  <button><svg class="i16" fill="#3468a8" stroke="none"><path d="M5 4l5 5-5 5z"/></svg>剖　　面</button>
  <button><svg class="i16" fill="#3468a8" stroke="none"><path d="M5 4l5 5-5 5z"/></svg>文字表格</button>
  <button><svg class="i16" fill="#3468a8" stroke="none"><path d="M5 4l5 5-5 5z"/></svg>尺寸标注</button>
  <button><svg class="i16" fill="#3468a8" stroke="none"><path d="M5 4l5 5-5 5z"/></svg>符号标注</button>
  <button><svg class="i16" fill="#3468a8" stroke="none"><path d="M5 4l5 5-5 5z"/></svg>图层控制</button>
  <button><svg class="i16" fill="#3468a8" stroke="none"><path d="M5 4l5 5-5 5z"/></svg>工　　具</button>
  <button><svg class="i16" fill="#3468a8" stroke="none"><path d="M5 4l5 5-5 5z"/></svg>三维建模</button>
  <button><svg class="i16" fill="#3468a8" stroke="none"><path d="M5 4l5 5-5 5z"/></svg>图块图案</button>
  <button><svg class="i16" fill="#3468a8" stroke="none"><path d="M5 4l5 5-5 5z"/></svg>场地布置</button>
  <button><svg class="i16" fill="#3468a8" stroke="none"><path d="M5 4l5 5-5 5z"/></svg>文件布图</button>
  <button><svg class="i16" fill="#3468a8" stroke="none"><path d="M5 4l5 5-5 5z"/></svg>其　　它</button>
  <button><svg class="i16" fill="#3468a8" stroke="none"><path d="M5 4l5 5-5 5z"/></svg>数据中心</button>
  <button><svg class="i16" fill="#3468a8" stroke="none"><path d="M5 4l5 5-5 5z"/></svg>帮助演示</button>
 </div></aside>

 <div class="d-flex flex-column flex-fill">
  <div class="d-flex flex-fill overflow-hidden">
   <div class="canvaswin d-flex flex-column flex-fill">
    <div class="d-flex flex-fill">
     <div class="draw flex-fill position-relative">
      <svg class="over" width="1400" height="600" stroke="#f00" shape-rendering="crispEdges"><path d="M540 370.500h811M540 487.500h811M595.500 329v223M712.500 329v223M800.500 330v223M918.500 332v222M989.500 329v222M1107.500 329v222M1183.500 332v223M1300.500 332v223"/><path d="M760.500 268.500h12v12h-12z" stroke="#fff"/></svg>
      <svg class="over bottom-0 start-0" width="160" height="160" stroke="#fff"><path d="M15.500 127.500h14v14h-14zM22.500 127V61M30 134.500h66M22.500 43l-7 18h14zM114 134.500l-18-7v14z" shape-rendering="crispEdges"/><path d="M20 60l2-10M25 60l-2-10M97 132l10 2M97 137l10-2" stroke="#888"/><path d="M17 13l7 9 8-9M24.500 22v10M128 125l15 19M143 125l-15 19"/></svg>
     </div>
     <div class="vbar d-flex flex-column align-items-center"><button aria-label="上"><svg width="16" height="17" stroke="#555" stroke-width="2"><path d="M4 11l4-4 4 4"/></svg></button><i class="thumb vthumb w-100"></i><button class="mt-auto" aria-label="下"><svg width="16" height="17" stroke="#555" stroke-width="2"><path d="M4 6l4 4 4-4"/></svg></button></div>
    </div>
    <div class="sheets d-flex cjk">
     <button class="nav1" aria-label="首个"><svg width="8" height="10" fill="#666" stroke="#666"><path d="M1 0v10M6 1v8L3 5z"/></svg></button><button class="nav1" aria-label="上一个"><svg width="8" height="10" fill="#666" stroke="#666"><path d="M6 1v8L2 5z"/></svg></button><button class="nav1" aria-label="下一个"><svg width="8" height="10" fill="#666" stroke="#666"><path d="M2 1v8l4-4z"/></svg></button><button class="nav1" aria-label="末个"><svg width="8" height="10" fill="#666" stroke="#666"><path d="M7 0v10M2 1v8l3-4z"/></svg></button>
     <button class="sheet on">模型</button><button class="sheet">布局1</button><svg width="8" height="15" stroke="#666"><path d="M1 15L7 0"/></svg><button class="sheet">布局2</button><svg width="8" height="15" stroke="#666"><path d="M1 15L7 0"/></svg>
     <div class="d-flex ms-auto" style="width:34.500%"><i class="thumb h-100" style="width:5px"></i><button aria-label="左"><svg width="16" height="15" stroke="#555" stroke-width="2"><path d="M10 3L6 7l4 4"/></svg></button><i class="thumb ms-auto" style="width:17px"></i><button class="me-3 ps-2" aria-label="右"><svg width="16" height="15" stroke="#555" stroke-width="2"><path d="M6 3l4 4-4 4"/></svg></button></div>
    </div>
   </div>

   <div class="dock"><div class="tb"><div class="grip"></div>
    <button><span class="seal cjk">构</span></button><hr>
    <button><svg><path d="M0 4h5l4 4h6M0 7h4l5 5h7M0 10h4l5 5h7" /><path d="M1 2h5l4 4h5" stroke="#2cc" stroke-width="3"/></svg></button>
    <button><svg><path d="M1 2h14v12H1zM8 2v12M1 5h14M1 8h14M1 11h14"/></svg></button>
    <button><svg stroke="#345"><path d="M0 1c9 0 15 6 15 14H9c0-5-3-9-9-9zM5 2L3 6M11 5L7 8M14 9l-5 3" fill="#fff"/></svg></button>
    <button><svg><path d="M3 2h10v9H3zM3 2l10 9M13 2L3 11M0 0v15h16V0M3 13h10"/></svg></button><hr>
    <button><svg stroke="#234"><path d="M4 1h8v14H4z" fill="#cde"/><path d="M11 3L6 8l5 5"/></svg></button>
    <button><svg stroke="#27c"><path d="M2 3h12v2H2z" fill="#fc3"/><path d="M5 0h6v3H5z" fill="#124"/><path d="M3.500 5v11M6.500 5v11M9.500 5v11M11.500 5v11"/></svg></button>
    <button><svg stroke="#112"><path d="M4 3v10M6 3v10M4 3h7M4 13h7"/><path d="M12 0v5M12 11v5" stroke="#27c" stroke-width="3"/></svg></button>
    <button><svg><path d="M2 2h12v12H2zM2 5h12M0 15h16"/><path d="M4 7h3v6H4zM9 7h3v6H9z" fill="#ccc"/></svg></button>
    <button><svg stroke="#27c"><path d="M6 3v10M10 3v10M8 3v10"/><path d="M5 1h6v2H5zM5 13h6v2H5z" fill="#112" stroke="#112"/></svg></button>
    <button><svg stroke="#27c"><path d="M6 3l4 2-4 2 4 2-4 2 4 2"/><path d="M5 1h6v2H5zM5 13h6v2H5z" fill="#112" stroke="#112"/></svg></button>
    <button><svg stroke="#112"><path d="M0 2h16M0 6h4M12 6h4M0 10h16M0 14h16" stroke-width="2"/><path d="M0 12.500h16M0 4.500h16" stroke="#8bf"/></svg></button><hr>
    <button><svg><path d="M0 12V1h10" stroke="#4ae"/><path d="M4 6h11v9H4zM4 9h11M9 9v6"/><path d="M8 0v5M6 3l2 3 2-3" stroke="#f00" stroke-width="2"/></svg></button>
    <button><svg><path d="M8 7h7v8H8z"/><path d="M2 1v3h3M2 6h4M2 9h4v2H2zM2 14h4" stroke="#111"/><path d="M7 2h4v3" stroke="#f00"/></svg></button>
    <button><svg><path d="M2 2h12v12H2zM6 2v12M10 2v12M2 8h12" fill="#dde"/></svg></button>
    <button><svg><path d="M0 3h16M0 6h16M0 11h16M0 14h16" stroke="#27c"/><path d="M1 2h2v4H1zM13 2h2v4h-2zM1 10h2v4H1zM13 10h2v4h-2z" stroke="#112"/></svg></button>
    <button><svg><path d="M0 2h16" stroke="#da2" stroke-width="2"/><path d="M0 5h16M0 12h16M3 5v10M6 5v10M10 5v10M13 5v10"/></svg></button><hr>
    <button><svg stroke="#111"><path d="M2 5l8-4M6 8l9-4M0 13l9-4M6 15l9-5" stroke-width="2"/><path d="M2 3l9 5-8 3" stroke="#e90" stroke-width="2"/></svg></button>
    <button><svg stroke="#888"><path d="M3 2v13M7 2v13M11 2v13"/><path d="M0 12h4V9h5V6h6V2" stroke="#e11"/></svg></button><hr>
    <button><svg stroke="#124"><path d="M0 13h11l4-4V1M0 1h12" stroke-width="2"/><path d="M6 4v5M4 7l2 3 2-3" stroke="#f00" stroke-width="2"/></svg></button>
    <button><svg stroke="#888"><path d="M0 15h11l4-4V1"/><path d="M6 4v5M4 7l2 3 2-3" stroke="#f00" stroke-width="2"/></svg></button>
   </div><div class="tb"><div class="grip"></div>
    <button><span class="seal cjk">符</span></button><hr>
    <button><svg stroke="#c11"><path d="M0 3h11M0 8h11M3 0v10M9 0v10"/><g stroke="#058"><circle cx="3" cy="13" r="2"/><circle cx="9" cy="13" r="2"/><circle cx="14" cy="3" r="2"/><circle cx="14" cy="8" r="2"/></g></svg></button>
    <button><svg stroke="#c11"><path d="M0 2h16M4 0v11M12 0v11"/><g stroke="#058"><circle cx="4" cy="13" r="2"/><circle cx="12" cy="13" r="2"/></g></svg></button><hr>
    <button><svg stroke="#111"><path d="M0 14l6-6h10"/><path d="M7 2h8M7 5h8" stroke="#05a" stroke-width="2" stroke-dasharray="2 1"/></svg></button>
    <button><svg stroke="#111"><path d="M0 9h16M3 9l3 5 3-5"/><text x="3" y="7" font-size="7" fill="#058" stroke="none" font-weight="700">2.0</text></svg></button>
    <button><svg stroke="#111"><path d="M0 8h16M0 11c4-4 5 6 9 1s4 3 7 3"/><text x="5" y="6" font-size="7" fill="#058" stroke="none" font-weight="700">2.0</text></svg></button><hr>
    <button><svg stroke="#000"><path d="M2 6V2h4M10 2h4v4" stroke-width="2"/><path d="M2 9v6M14 9v6" stroke="#058"/></svg></button>
    <button><svg stroke="#000"><path d="M1 14h5M10 14h5" stroke-width="2"/><path d="M2 2v8M14 2v8" stroke="#058"/></svg></button>
    <button><svg stroke="#000"><path d="M0 12h16M8 12l-3-2v4z"/><text x="6" y="8" font-size="7" fill="#058" stroke="none">1%</text></svg></button>
    <button><svg stroke="#000"><path d="M0 9h5l2-4 2 8 2-4h5"/></svg></button>
    <button><svg stroke="#345"><path d="M2 0v6h5l3-2 4 2V0M2 16v-6h5l3-2 4 2v6" fill="#def"/></svg></button>
    <button><svg stroke="#069"><path d="M0 9h6M7 9h2M10 9h6M2 4v10M5 4v10M11 4v10M14 4v10"/></svg></button>
   </div></div>

   <div class="dock"><div class="tb"><div class="grip"></div>
    <button><svg stroke="#000"><path d="M1 1h9v8H1z" fill="#dde"/><path d="M6 9l7-8h3" stroke="#07c" stroke-width="3"/><path d="M0 10h12v6H0z" fill="#222"/><text x="0" y="15" font-size="6" fill="#fff" stroke="none" font-weight="700">SYS</text></svg></button>
    <button><svg><path d="M1 2h3v3H1zM6 2h3v3H6z" stroke="#088"/><path d="M11 2h3v3h-3z" stroke="#80a"/><path d="M1 8h3v3H1z" stroke="#c0c"/><path d="M6 8h3v3H6z" stroke="#063"/><circle cx="13" cy="9" r="3" fill="#fd4" stroke="#e90"/><path d="M12 13h2v3h-2z" fill="#888" stroke="none"/></svg></button>
    <button><svg stroke="#999"><path d="M1 2h3v3H1zM6 2h3v3H6zM11 2h3v3h-3zM1 8h3v3H1zM6 8h3v3H6z"/><circle cx="13" cy="9" r="3" fill="#ace" stroke="#789"/><path d="M12 13h2v3h-2z" fill="#888" stroke="none"/></svg></button><hr>
    <button><svg stroke="none"><circle cx="7" cy="6" r="6.500" fill="#f0502c"/><path d="M3 6h8v4l-4 3-4-3z" fill="#ffd9b8"/><path d="M6 13l4-3v6z" fill="#07c"/><path d="M16 13l-4-4v7z" fill="#e11"/></svg></button>
    <button><svg stroke="#000"><path d="M1 3h6v4H1zM4 0v11" stroke-width="1.500"/><path d="M15 1h-4v7h4M11 4h4" stroke="#888"/><path d="M6 13l4-3v6zM8 13h3" fill="#07c" stroke="#07c"/><path d="M16 13l-4-3v6z" fill="#e11" stroke="none"/></svg></button>
    <button><svg stroke="#555"><path d="M1 4V1h6v3M4 1v3M10 4V1h5v3M12 1v3"/><path d="M6 12H2v3h4M9 15v-3h6v3M12 12v3" stroke="#000"/><path d="M8 4v5M6 8l2 2 2-2" stroke="#f00" stroke-width="2"/></svg></button>
    <button><svg><path d="M0 3h16" stroke-width="3"/><path d="M8 4h6v10H8z" fill="#fff"/><path d="M9 7h4M9 9h4M9 11h4M5 13c2-2 0-4-3-4M4 7L1 9l3 2" stroke="#07c"/></svg></button><hr>
    <button><svg stroke="#222"><path d="M2 0h12v9H2z" fill="#fff"/><text x="3" y="8" font-size="8" fill="#e11" stroke="none" font-weight="700">AZ</text><path d="M0 11.500h16M1 12v4M4 12v3M7 12v4M10 12v3M13 12v4" stroke="#07a"/></svg></button>
    <button><svg stroke="#222"><path d="M2 2h13v10H2z" fill="#8ce"/><text x="4" y="10" font-size="8" fill="#058" stroke="none" font-weight="700">AZ</text><path d="M0 12h2v2H0z"/></svg></button><hr>
    <button><svg stroke="none"><path d="M1 3l14-3v15l-14-2z" fill="#3468a8"/><text x="6" y="13" font-size="13" fill="#fff" font-weight="700">?</text></svg></button>
    <button><svg stroke="#357"><path d="M1 0h14v15H1z" fill="#58a"/><path d="M4 2h8v5H4z" fill="#fff"/><text x="0" y="15" font-size="8" fill="#fff" stroke="none" font-weight="700">Ver</text></svg></button>
    <button><svg stroke="none"><path d="M3 7h10v8H3z" fill="#f4ead0"/><path d="M8 0L0 8l2 2 6-6 6 6 2-2z" fill="#d8401c"/><path d="M5 9h3v6H5z" fill="#a52"/><circle cx="13" cy="12" r="3" fill="#6b3"/></svg></button>
    <button><svg stroke="none" class="cjk" font-size="8" font-weight="900"><text x="0" y="7" fill="#069">建</text><text x="8" y="7" fill="#258">源</text><text x="0" y="15" fill="#258">筑</text><text x="8" y="15" fill="#c11">泉</text></svg></button>
   </div><div class="tb"><div class="grip"></div>
    <button><span class="seal cjk">装</span></button><hr>
    <button><svg stroke="#a55"><path d="M0 2h16" stroke-width="3"/><path d="M4 4h9v10H4zM4 12l8-7M2 15h12"/></svg></button>
    <button><svg stroke="#4af"><path d="M0 15V3l4 3 3-4v13zM9 15V1M11 15V7l4-5v13M3 14v-3h2v3"/></svg></button><hr>
    <button><svg stroke="#16e"><path d="M0 2h16M0 8h16M0 13h16M3 3v9M6 12l4-9M10 3v9M13 3v9"/></svg></button>
    <button><svg stroke="#27e" stroke-width="1.500"><path d="M0 13c2 0 1-9 4-9s1 9 4 7 0-4 2-4 1 3 6 1M13 5v6"/></svg></button>
    <button><svg stroke="#27e"><path d="M0 1h15v15M0 4h12v12M0 7h9v9M0 10h6"/></svg></button>
    <button><svg stroke="#b66"><path d="M1 4h14v9H1zM8 4v9M2 5l6 7M8 5l-6 7M9 5l6 7M15 5l-6 7"/></svg></button>
    <button><svg stroke="#a55"><path d="M0 1h16M2 3h12v11H2zM8 3v11M2 6h12M7 7L3 10l4 3M9 7l4 3-4 3" /></svg></button><hr>
    <button><svg stroke="#000"><path d="M1 1v12M8 1v5M8 8h8M4 15h12"/><path d="M1 13l7-7M4 15l5-7" stroke="#b8d"/></svg></button>
    <button><svg stroke="#000"><path d="M1 1h5v6H1zM8 1h7v6H8zM1 9h5v6H1zM8 9h7v6H8z" fill="#fc0" stroke="none"/><path d="M7 0v16M0 8h16M2 10l4 4M6 10l-4 4"/></svg></button>
    <button><svg stroke="#000"><path d="M0 2h16M0 6h16M0 10h16M0 14h16" stroke-width="2"/><path d="M0 4h16M0 8h16M0 12h16" stroke="#fc0" stroke-width="2"/></svg></button><hr>
    <button><svg stroke="#750"><path d="M0 3h16v10H0z" fill="#fb0"/><path d="M2 12l9-8M8 4l8 7"/></svg></button>
    <button><svg stroke="#750"><path d="M0 3h16v10H0z" fill="#fb0" stroke="#000"/><path d="M0 8h16M6 4v8M10 4v8"/></svg></button>
    <button><svg stroke="#000"><path d="M0 3h16v10H0z" fill="#fb0"/><path d="M0 7h7v3h4v3M8 3v4"/></svg></button>
    <button><svg stroke="#068"><path d="M0 4h16v8H0z" fill="#5df" stroke="none"/><path d="M0 11l4-5 4 5 4-5 4 5M0 4h16"/></svg></button>
    <button><svg stroke="#750"><path d="M0 3h16v10H0z" fill="#cfe" stroke="#111"/><path d="M2 6l4 4M6 6l-4 4M10 6l4 4M14 6l-4 4"/></svg></button>
    <button><svg stroke="#39b"><path d="M5 0v12H0M8 2h8M8 6h8M2 6v9"/><path d="M6 8h8v5H6z" fill="#fff" stroke="#111"/><circle cx="9" cy="11" r="1.500" fill="#e11" stroke="none"/></svg></button>
    <button><svg stroke="#27e"><path d="M0 1h16M0 15h16" stroke-width="2"/><path d="M1 4h3v8H1zM13 4h3v8h-3z" stroke="#000" fill="#fff"/><path d="M6 4h5v8H6z" fill="#9cf"/></svg></button><hr>
    <button><svg stroke="#17b" stroke-width="3"><path d="M2 3h12M2 13h12M8 3v10"/></svg></button>
    <button><svg stroke="#888"><path d="M0 2h16M13 0v16"/><path d="M3 0v14h10" stroke="#33d" stroke-width="4"/></svg></button>
   </div></div>
  </div>

  <section class="cmd flex-shrink-0 d-flex flex-column">
   <div class="d-flex flex-fill"><div class="flex-fill"><div class="say"><span class="zh">自动保存到</span><span class="ps-2">C:\Users\ADMINI~1\AppData\Local\Temp\Drawing1_1_33_6334.sv$ ...</span></div><div class="say zh">命令:</div></div><div class="d-flex flex-column justify-content-between bg-light"><svg width="16" height="18" stroke="#555" stroke-width="2"><path d="M4 11l4-4 4 4"/></svg><svg width="16" height="18" stroke="#555" stroke-width="2"><path d="M4 8l4 4 4-4"/></svg></div></div>
   <div class="cmdin d-flex"><label class="say zh" for="cmdline">命令:</label><input id="cmdline" type="text"><div class="d-flex bg-light"><svg width="20" height="17" stroke="#555" stroke-width="2"><path d="M13 4L9 8l4 4"/></svg><i class="thumb" style="width:17px"></i><svg width="49" height="17" stroke="#555" stroke-width="2"><path d="M20 4l4 4-4 4"/></svg></div></div>
  </section>
 </div>
</main>

<footer>
<div class="status d-flex cjk">
 <button class="ms-1" style="width:81px">比例<span class="mono ms-2">1:100</span><i class="tri dk ms-2"></i></button><span class="mono ps-2" style="width:122px">35960, 25275, 0</span>
 <button aria-label="捕捉"><svg class="i16" stroke="#222"><path d="M2 3h9M2 6h9M2 9h9M2 12h9" stroke-dasharray="1 2"/><path d="M13 2v9M12 13h2"/></svg></button>
 <button aria-label="栅格"><svg class="i16" stroke="#222"><path d="M1.500 1.500h13v13h-13zM1 4.500h14M1 7.500h14M1 10.500h14M4.500 1v14M7.500 1v14M10.500 1v14" fill="#fff"/></svg></button>
 <button class="on" aria-label="正交"><svg class="i16"><path d="M1 1v14h14M1 8h6v7"/></svg></button>
 <button aria-label="极轴"><svg class="i16"><circle cx="7" cy="9" r="5"/><path d="M7 9h8M7 9l7-7M11 5c2 1 2 2 2 4"/></svg></button>
 <button class="on" aria-label="对象捕捉"><svg class="i16"><path d="M3 3h12v12H3z" fill="#fff"/><circle cx="3" cy="3" r="2" stroke="#e52"/></svg></button>
 <button class="on" aria-label="对象追踪"><svg class="i16" stroke-width="1.500"><path d="M13 2L2 13h12"/></svg></button>
 <button aria-label="动态 UCS"><svg class="i16"><path d="M2 1v13h13M2 14L11 4"/><path d="M12 0L8 7h3l-1 4 5-6h-3z" fill="#f8a020" stroke="none"/></svg></button>
 <button aria-label="动态输入"><svg class="i16" stroke="#111"><path d="M6 1v11M1 7h9" stroke-width="1.500"/><path d="M8.500 9.500h6v4h-6z"/></svg></button>
 <button aria-label="线宽"><svg class="i16" stroke="#111" stroke-width="1.500"><path d="M8 1v14"/><path d="M1 8h14" stroke-width="2"/></svg></button>
 <button aria-label="快捷特性"><svg class="i16" stroke="#111"><path d="M4.500 2.500h8v11h-8z" fill="#fff"/><path d="M6 5h5M6 8h5M6 11h5" stroke-dasharray="1 1 3"/></svg></button>
 <div class="d-flex ms-auto">
 <button aria-label="模型"><svg class="i16"><path d="M3 1h11v11H3z" fill="#eee"/><path d="M5 3v7h7zM1 14.500h14"/></svg></button>
 <button class="gapr" aria-label="布局"><svg class="i16"><path d="M1 2h6v8H1zM9 2h6v8H9z" fill="#eee"/><path d="M1 14h14" stroke-width="2"/></svg></button>
 <button aria-label="平移"><svg class="i16"><path d="M2 5l3 2 1-3 3 1 2 2 1 5-4 3-4-2z" fill="#fff"/><path d="M13 0v7M10 4h6" stroke="#111"/></svg></button>
 <button aria-label="缩放"><svg class="i16"><circle cx="6" cy="6" r="5" fill="#dff"/><path d="M10 10l5 5" stroke-width="3"/></svg></button>
 <button aria-label="控制盘"><svg class="i16"><circle cx="8" cy="8" r="7" fill="#eee"/><circle cx="8" cy="8" r="3.500"/><path d="M3 3l10 10M13 3L3 13"/></svg></button>
 <button class="gapr" aria-label="动画"><svg class="i16"><path d="M1 1h3v3H1zM6 1h3v3H6zM11 1h3v3h-3zM3 7h10v8H3z" fill="#fff"/><path d="M6 9v4l4-2z" fill="#333"/></svg></button>
 <button style="width:54px"><svg class="i16"><path d="M8 1l2 7 5 5-4 1-3-4-3 4-4-1 5-5z" fill="#fff"/></svg><span class="mono ms-1">1:1</span><i class="tri dk"></i></button>
 <button aria-label="注释可见"><svg class="i16"><path d="M7 1l2 7 5 5-4 1-3-4-3 4-3-1 4-5z" fill="#fff"/><circle cx="12" cy="9" r="3" fill="#fc4" stroke="#e80"/></svg></button>
 <button class="me-2" aria-label="自动缩放"><svg class="i16" stroke="#888"><path d="M8 1l2 7 5 5-4 1-3-4-3 4-4-1 5-5z" fill="#ccc"/></svg></button>
 <button style="width:119px"><svg class="i16"><circle cx="8" cy="8" r="6" stroke-width="2.500" stroke-dasharray="3 2"/><circle cx="8" cy="8" r="4.500" fill="#eee"/><circle cx="8" cy="8" r="2"/></svg>二维草图与注释<i class="tri dk ms-1"></i></button>
 <button aria-label="锁定"><svg class="i16"><path d="M1 7h9v8H1z" fill="#fff"/><path d="M8 7V4c0-4 6-4 6 0v5M5 9v4"/></svg></button>
 <button class="on" style="width:31px">编组</button><button style="width:29px">基线</button><button class="on" style="width:30px">填充</button><button class="on" style="width:30px">加粗</button><button class="me-1" style="width:54px">动态标注</button>
 <button style="min-width:12px" aria-label="菜单"><i class="tri dk m-0"></i></button><button aria-label="全屏"><svg class="i16"><path d="M1 2h14v12H1z" fill="#fff"/><path d="M1 3.500h14" stroke-width="2"/></svg></button>
 </div>
</div>
<div class="taskbar d-flex overflow-hidden text-white"><i style="width:48px;margin-left:245px;background:#4c6068"></i><span class="ms-auto clock">20:20</span></div>
</footer>

<!-- window edge peeking in from the top -->
<div class="over floatedge"></div>
<!-- volume slider docked on the right -->
<svg class="over end-0" style="top:846px" width="10" height="58"><path d="M12 .500H5Q.500 .500.500 6v46q0 5.500 4.500 5.500h7z" fill="#3a4258" stroke="#20283c"/><path d="M7 8v34" stroke="#111" stroke-width="5" stroke-dasharray="1 1"/><path d="M7 43v10" stroke="#5fc8a0" stroke-width="5" stroke-dasharray="1 1"/></svg>
<!-- watermark -->
<svg class="over" style="right:60px;bottom:28px" width="384" height="180" stroke="none" fill="#fff">
 <g opacity=".7" style="filter:drop-shadow(0 0 2px #0006)">
 <text x="-5" y="109" font-family="Liberation Sans" font-weight="700" font-size="76">Bai</text>
 <ellipse cx="129" cy="46" rx="13" ry="16"/><ellipse cx="153" cy="22" rx="12" ry="17"/><ellipse cx="184" cy="23" rx="12" ry="16" transform="rotate(12 184 23)"/><ellipse cx="203" cy="53" rx="13" ry="16"/>
 <path d="M165 48c12 0 15 10 23 18s20 16 20 30c0 22-22 18-42 16-20 2-43 6-43-17 0-13 10-18 19-28 7-8 11-19 23-19z"/>
 <text x="220" y="106" font-family="Noto Sans CJK SC" font-weight="900" font-size="58">经验</text></g>
 <text x="137" y="97" font-family="Liberation Sans" font-weight="700" font-size="43" fill="#000">du</text>
 <text x="1" y="156" font-family="Open Sans" font-size="40" opacity=".9" style="filter:drop-shadow(0 0 1px #0008)">jingyan.baidu.com</text>
</svg>
<!-- callout: frame and arrow -->
<svg class="over top-0 start-0" width="600" height="720"><path d="M1.500 348.500h84v26h-84z" stroke="#f93a3a" stroke-width="3"/><path d="M83 367l17 1-1 4 81 54 396 268-1 1-395-260-84-57-7 4z" fill="#f93a3a" stroke="none"/></svg>

<script src="https://cdn.jsdelivr.net/npm/bootstrap@5.3.0/dist/js/bootstrap.bundle.min.js"></script>
</body>
</html>
